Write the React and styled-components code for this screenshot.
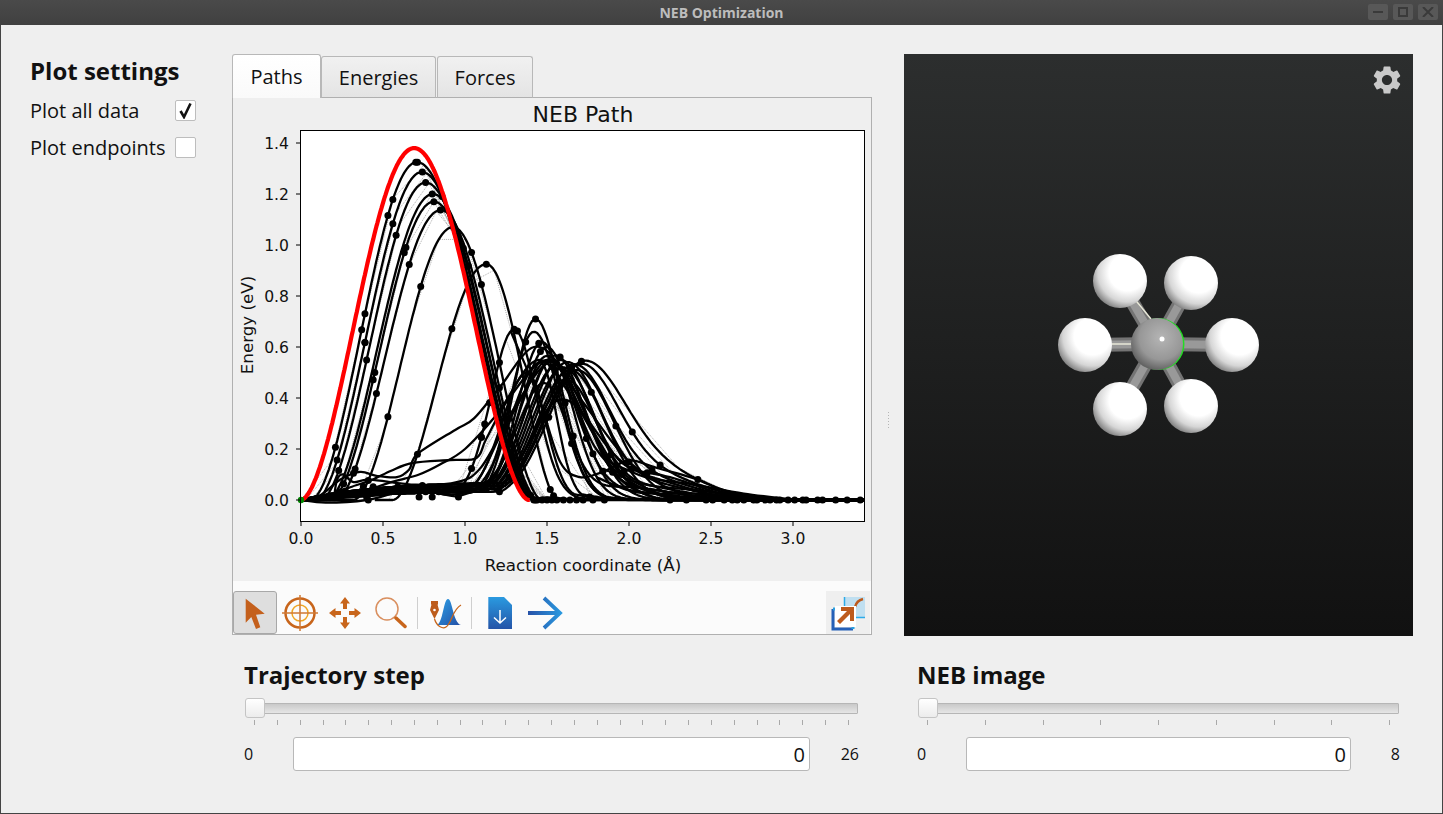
import React from 'react';
import styled, { createGlobalStyle } from 'styled-components';
import { MdSettings } from 'react-icons/md';

const GlobalStyle = createGlobalStyle`
  html, body {
    margin: 0;
    padding: 0;
    background: #efefef;
    overflow: hidden;
  }
  * { box-sizing: border-box; }
`;

const Window = styled.div`
  width: 1443px;
  height: 814px;
  display: flex;
  flex-direction: column;
  font-family: "Open Sans", "Noto Sans", sans-serif;
  color: #111;
  background: #efefef;
`;

const TitleBar = styled.div`
  height: 25px;
  flex: none;
  display: flex;
  align-items: center;
  justify-content: center;
  position: relative;
  background: linear-gradient(#4a4a4a, #404040);
  color: #bdbdbd;
  font-size: 14px;
  font-weight: 700;
`;

const WindowButtons = styled.div`
  position: absolute;
  top: 4px;
  right: 5px;
  display: flex;
  gap: 5px;
`;

const WindowButton = styled.div`
  width: 20px;
  height: 16px;
  background: #585858;
  border-radius: 2px;
  display: flex;
  align-items: center;
  justify-content: center;
`;

const Body = styled.div`
  flex: 1;
  display: flex;
  padding: 29px 29px 0 29px;
  border: 1px solid #444;
  border-top: none;
`;

const Sidebar = styled.div`
  width: 201px;
  flex: none;
`;

const SideTitle = styled.div`
  font-size: 24px;
  font-weight: 700;
  line-height: 30px;
  margin-top: 2px;
  margin-bottom: 6px;
`;

const CheckRow = styled.div`
  display: flex;
  align-items: center;
  justify-content: space-between;
  width: 166px;
  height: 37px;
  font-size: 20px;
`;

const CheckBox = styled.div`
  width: 21px;
  height: 21px;
  background: #fff;
  border: 1px solid #bdbdbd;
  border-radius: 2px;
  display: flex;
  align-items: center;
  justify-content: center;
`;

const CenterColumn = styled.div`
  width: 641px;
  flex: none;
  display: flex;
  flex-direction: column;
`;

const TabBar = styled.div`
  display: flex;
  align-items: flex-end;
  height: 44px;
  padding-left: 1px;
  position: relative;
  z-index: 1;
  margin-bottom: -1px;
`;

const Tab = styled.div`
  height: ${p => (p.$active ? '44px' : '42px')};
  width: ${p => p.$w}px;
  margin-right: ${p => (p.$active ? '0' : '1px')};
  display: flex;
  align-items: center;
  justify-content: center;
  font-size: 20px;
  border: 1px solid #b8b8b8;
  border-bottom: ${p => (p.$active ? 'none' : '1px solid #b0b0b0')};
  border-radius: 3px 3px 0 0;
  background: ${p => (p.$active ? 'linear-gradient(#fff, #fafafa)' : 'linear-gradient(#f1f1f1, #e4e4e4)')};
`;

const PlotPane = styled.div`
  width: 640px;
  margin-left: 1px;
  height: 538px;
  border: 1px solid #b0b0b0;
  background: #efefef;
  display: flex;
  flex-direction: column;
`;

const Chart = styled.svg`
  display: block;
  width: 638px;
  height: 483px;
  flex: none;
`;

const Toolbar = styled.div`
  flex: 1;
  display: flex;
  align-items: flex-end;
  gap: 1px;
  background: #fbfbfb;
`;

const ToolButton = styled.div`
  width: ${p => p.$w || 44}px;
  height: 43px;
  flex: none;
  display: flex;
  align-items: center;
  justify-content: center;
  border-radius: 3px;
  border: 1px solid ${p => (p.$active ? '#a8a8a8' : 'transparent')};
  background: ${p => (p.$active ? '#dedede' : 'transparent')};
  margin-left: ${p => (p.$push ? 'auto' : '0')};
  ${p => p.$flat && 'background: #efefef; border-radius: 0; margin-right: 1px;'}
`;

const ToolSep = styled.div`
  width: 1px;
  height: 32px;
  background: #cfcfcf;
  margin: 0 5px 5px 4px;
  flex: none;
`;

const Splitter = styled.div`
  width: 32px;
  flex: none;
  height: 582px;
  display: flex;
  align-items: center;
  justify-content: center;
  &::before {
    content: '';
    width: 1px;
    height: 16px;
    margin-top: 150px;
    background: repeating-linear-gradient(#b5b5b5 0 1px, transparent 1px 3px);
  }
`;

const RightColumn = styled.div`
  width: 509px;
  flex: none;
  display: flex;
  flex-direction: column;
`;

const Viewer = styled.div`
  width: 509px;
  height: 582px;
  position: relative;
  display: flex;
  align-items: center;
  justify-content: center;
  background: linear-gradient(#2c2e2e, #111);
`;

const GearButton = styled.div`
  position: absolute;
  top: 9px;
  right: 9px;
  color: #c9c9c9;
  display: flex;
`;

const SliderGroup = styled.div`
  padding: 0 13px;
  margin-top: ${p => p.$top}px;
`;

const SliderTitle = styled.div`
  font-size: 24px;
  font-weight: 700;
  line-height: 30px;
`;

const Track = styled.div`
  height: 20px;
  margin-top: 8px;
  display: flex;
  align-items: center;
  position: relative;
  padding-left: 1px;
  padding-right: 1px;
  &::before {
    content: '';
    flex: 1;
    height: 9px;
    background: linear-gradient(#c9c9c9, #e6e6e6);
    border: 1px solid #b6b6b6;
    border-radius: 1px;
  }
`;

const Handle = styled.div`
  position: absolute;
  left: 1px;
  top: 0;
  width: 20px;
  height: 20px;
  background: linear-gradient(#fff, #ececec);
  border: 1px solid #c4c4c4;
  border-radius: 3px;
`;

const Ticks = styled.div`
  display: flex;
  justify-content: space-between;
  padding: 0 ${p => p.$pad}px;
  margin-top: 2px;
  height: 5px;
`;

const Tick = styled.div`
  width: 1px;
  height: 5px;
  background: #a9a9a9;
`;

const ValueRow = styled.div`
  display: flex;
  align-items: center;
  justify-content: space-between;
  margin-top: 12px;
  font-size: 16px;
`;

const MinLabel = styled.div`
  width: 49px;
  flex: none;
`;

const ValueBox = styled.div`
  flex: 1;
  height: 34px;
  background: #fff;
  border: 1px solid #b8b8b8;
  border-radius: 3px;
  font-size: 20px;
  display: flex;
  align-items: center;
  justify-content: flex-end;
  padding-right: 4px;
`;

const MaxLabel = styled.div`
  width: 49px;
  flex: none;
  text-align: right;
`;

const px = x => 301 + x * 164;
const py = y => 500 - y * 255;

// rising / falling shape for the big barrier paths
const sineCurve = (x0, xp, x1, h, pow = 1.8) => x => {
  if (x <= x0 || x >= x1) return 0;
  const u = x < xp ? ((x - x0) / (xp - x0)) * 0.5 : 0.5 + ((x - xp) / (x1 - xp)) * 0.5;
  return h * Math.pow(Math.sin(Math.PI * u), pow);
};

const gaussCurve = (xp, h, wl, wr, shoulder = 0, base = 0.05) => x => {
  const w = x < xp ? wl : wr;
  const g = h * Math.exp(-Math.pow((x - xp) / w, 2));
  const b = base * (1 - Math.exp(-x / 0.45)) * (x < xp ? 1 : Math.exp(-Math.pow((x - xp) / 0.3, 2)));
  const s = shoulder * Math.exp(-Math.pow((x - (xp + 0.5)) / 0.38, 2)) * (x > xp - 0.1 ? 1 : 0);
  return Math.max(g, b) + s;
};

const bigSpecs = [
  [0.06, 0.707, 1.41, 1.325],
  [0.09, 0.737, 1.42, 1.286],
  [0.12, 0.76, 1.43, 1.245],
  [0.16, 0.805, 1.44, 1.2],
  [0.18, 0.81, 1.44, 1.17],
  [0.21, 0.853, 1.45, 1.137],
  [0.32, 0.927, 1.47, 1.07],
  [0.56, 1.13, 1.57, 0.925],
];

const bigPaths = bigSpecs.map(a => sineCurve(...a));

const latePaths = [
  [1.30, 0.67, 0.2, 0.19],
  [1.43, 0.71, 0.19, 0.21],
  [1.42, 0.66, 0.2, 0.22],
  [1.47, 0.62, 0.21, 0.2],
  [1.5, 0.6, 0.23, 0.22],
  [1.5, 0.56, 0.24, 0.25, 0.03],
  [1.53, 0.55, 0.24, 0.24],
  [1.55, 0.56, 0.26, 0.25, 0.04],
  [1.56, 0.53, 0.26, 0.27],
  [1.58, 0.54, 0.26, 0.27, 0.05],
  [1.6, 0.52, 0.27, 0.28],
  [1.62, 0.53, 0.27, 0.29, 0.06],
  [1.64, 0.51, 0.28, 0.3],
  [1.66, 0.52, 0.28, 0.31, 0.07],
  [1.68, 0.51, 0.29, 0.32],
  [1.7, 0.52, 0.3, 0.33, 0.08],
  [1.72, 0.53, 0.3, 0.36, 0.09],
  [1.46, 0.54, 0.25, 0.14],
  [1.38, 0.5, 0.22, 0.16],
  [1.58, 0.38, 0.26, 0.3, 0.08],
  [1.48, 0.45, 0.24, 0.2, 0.05],
  [1.62, 0.45, 0.28, 0.24, 0.1],
].map((a, i) => gaussCurve(a[0], a[1], a[2], a[3], a[4] || 0, 0.035 + (i % 4) * 0.012));

// hand-read paths that do not follow a single bump
const knotPaths = [
  [[0, 0], [0.12, 0.02], [0.24, 0.08], [0.36, 0.11], [0.46, 0.095], [0.585, 0.09], [0.66, 0.12], [0.71, 0.18], [0.94, 0.275], [1.055, 0.32], [1.21, 0.44], [1.42, 0.6], [1.6, 0.5], [1.8, 0.2], [2.1, 0.04], [2.5, 0]],
  [[0, 0], [0.2, 0.02], [0.3, 0.05], [0.43, 0.078], [0.55, 0.115], [0.68, 0.145], [0.91, 0.157], [1.07, 0.165], [1.13, 0.24], [1.27, 0.4], [1.5, 0.55], [1.7, 0.4], [2, 0.15], [2.3, 0.03], [2.6, 0]],
  [[0, 0], [0.3, 0.02], [0.55, 0.07], [0.72, 0.1], [0.85, 0.14], [1.0, 0.2], [1.2, 0.34], [1.45, 0.55], [1.7, 0.35], [1.9, 0.14], [2.2, 0.02], [2.5, 0]],
  [[0.2, 0], [0.22, 0.08], [0.26, 0.1], [0.32, 0.07], [0.42, 0.08], [0.7, 0.06], [0.95, 0.07], [1.1, 0.13], [1.3, 0.35], [1.52, 0.55], [1.75, 0.3], [1.95, 0.08], [2.2, 0]],
  [[0, 0], [0.4, 0.025], [0.8, 0.05], [1.0, 0.055], [1.1, 0.1], [1.3, 0.36], [1.55, 0.54], [1.8, 0.25], [2.0, 0.07], [2.3, 0]],
  [[1.28, 0.66], [1.45, 0.4], [1.58, 0.15], [1.7, 0.09], [1.84, 0.11], [2.0, 0.155], [2.15, 0.13], [2.42, 0.08], [2.63, 0.027], [3, 0]],
  [[0, 0], [0.1, 0.0], [0.3, 0.01], [0.5, 0.02], [0.75, 0.035], [0.9, 0.02], [1.05, 0.04], [1.15, 0.08], [1.22, 0.14]],
  [[0, 0], [0.15, -0.01], [0.4, 0.0], [0.6, 0.03], [0.8, 0.03], [0.95, 0.015], [1.1, 0.05], [1.2, 0.1]],
  [[1.85, 0.16], [2.1, 0.09], [2.4, 0.06], [2.7, 0.025], [3.0, 0.002]],
  [[1.85, 0.12], [2.1, 0.06], [2.4, 0.04], [2.7, 0.015], [3.0, 0]],
  [[1.8, 0.09], [2.05, 0.03], [2.4, 0.025], [2.7, 0.01], [3.0, 0]],
  [[1.4, 0], [1.5, 0.01], [1.7, 0], [1.85, 0]],
];

const sample = (fn, from = 0, to = 3.45, step = 0.015) => {
  const pts = [];
  for (let x = from; x <= to; x += step) pts.push([x, fn(x)]);
  return pts;
};

const toPath = pts => pts.map((p, i) => `${i ? 'L' : 'M'}${px(p[0]).toFixed(1)} ${py(p[1]).toFixed(1)}`).join('');

const splinePath = k => {
  let d = `M${px(k[0][0])} ${py(k[0][1])}`;
  for (let i = 0; i < k.length - 1; i++) {
    const p0 = k[Math.max(i - 1, 0)];
    const p1 = k[i];
    const p2 = k[i + 1];
    const p3 = k[Math.min(i + 2, k.length - 1)];
    const c1x = px(p1[0]) + (px(p2[0]) - px(p0[0])) / 6;
    const c1y = py(p1[1]) + (py(p2[1]) - py(p0[1])) / 6;
    const c2x = px(p2[0]) - (px(p3[0]) - px(p1[0])) / 6;
    const c2y = py(p2[1]) - (py(p3[1]) - py(p1[1])) / 6;
    d += `C${c1x.toFixed(1)} ${c1y.toFixed(1)} ${c2x.toFixed(1)} ${c2y.toFixed(1)} ${px(p2[0]).toFixed(1)} ${py(p2[1]).toFixed(1)}`;
  }
  return d;
};

const chordPath = (fn, from, to, n) => {
  const pts = [];
  for (let i = 0; i <= n; i++) {
    const x = from + ((to - from) * i) / n;
    pts.push([x, fn(x)]);
  }
  return toPath(pts);
};

// dots read off the picture, page coordinates
const dotsRaw = [
  [358, 309], [360, 330], [363, 345], [389, 213], [392, 226], [397, 237], [404, 249], [406, 256], [411, 267], [424, 286],
  [417, 162], [422, 172], [426, 182], [433, 194], [434, 201], [441, 210], [453, 227], [415, 148], [386, 196], [445, 196],
  [455, 329], [482, 286], [487, 264], [468, 267], [462, 249], [475, 253],
  [515, 329], [520, 329], [536, 319], [528, 343], [539, 345], [543, 353],
  [363, 345], [368, 358], [375, 372], [376, 380], [381, 393], [393, 417],
  [332, 447], [335, 458], [338, 472], [342, 483], [352, 473], [360, 472], [372, 480], [397, 477], [418, 454], [455, 430], [474, 418], [450, 460], [487, 439], [422, 485], [431, 490], [368, 500], [375, 492], [346, 492],
  [500, 387], [502, 363], [490, 402], [574, 342], [580, 355], [556, 373], [552, 420], [576, 438], [566, 403], [590, 393], [551, 367], [570, 368],
  [635, 431], [616, 425], [603, 472], [591, 456], [570, 445], [584, 439],
  [630, 460], [633, 468], [653, 467], [658, 467], [647, 472], [610, 456], [622, 476], [610, 474], [698, 480], [625, 471],
  [531, 496], [545, 492], [557, 493], [500, 498], [516, 492], [510, 478], [535, 500], [590, 498],
];

// snap each dot onto the nearest drawn curve
const curvePts = [
  ...bigPaths.flatMap(fn => sample(fn, 0, 1.7, 0.01)),
  ...latePaths.flatMap(fn => sample(fn, 0.3, 2.8, 0.01)),
].map(p => [px(p[0]), py(p[1])]);

const dotsPage = dotsRaw.map(([x, y]) => {
  let best = [x, y];
  let dist = Infinity;
  curvePts.forEach(p => {
    const d = (p[0] - x) ** 2 + (p[1] - y) ** 2;
    if (d < dist) {
      dist = d;
      best = p;
    }
  });
  return best;
});

const baseDotsX = [1.42, 1.44, 1.47, 1.5, 1.53, 1.56, 1.6, 1.64, 1.68, 1.72, 1.78, 1.85, 2.25, 2.35, 2.47, 2.51, 2.58, 2.63, 2.66, 2.7, 2.76, 2.78, 2.83, 2.86, 2.9, 2.92, 2.97, 3.01, 3.06, 3.08, 3.15, 3.18, 3.26, 3.33, 3.41];
const lowDotsX = [0.22, 0.24, 0.38, 0.4, 0.42, 0.44, 0.72, 0.76, 0.78, 0.8, 0.84, 0.9, 0.96];

const red = sineCurve(0, 0.69, 1.39, 1.38, 1.75);

const xTicks = [0, 0.5, 1, 1.5, 2, 2.5, 3];
const yTicks = [0, 0.2, 0.4, 0.6, 0.8, 1, 1.2, 1.4];

const PlotChart = () => (
  <Chart viewBox="233 98 638 483">
    <defs>
      <clipPath id="axes">
        <rect x="301" y="130" width="563" height="391" />
      </clipPath>
    </defs>
    <text x="583" y="122" fontFamily="DejaVu Sans" fontSize="22" textAnchor="middle" fill="#111">NEB Path</text>
    <rect x="301" y="130" width="563" height="391" fill="#fff" />
    <g clipPath="url(#axes)" fill="none" strokeLinejoin="round">
      <g stroke="#8a8a8a" strokeWidth="0.7" strokeDasharray="1 1">
        {bigPaths.map((fn, i) => <path key={i} d={chordPath(fn, 0.03 * i, 1.5, 8)} />)}
        {latePaths.map((fn, i) => <path key={i} d={chordPath(fn, 0.1 + i * 0.03, 2.4 + i * 0.03, 8)} />)}
      </g>
      <g stroke="#000" strokeWidth="2.3">
        {bigPaths.map((fn, i) => (
          <path key={i} d={toPath(sample(fn, i === 7 ? 0.45 : 0, bigSpecs[i][2], 0.01))} />
        ))}
        {latePaths.map((fn, i) => <path key={i} d={toPath(sample(fn))} />)}
        {knotPaths.map((k, i) => <path key={i} d={splinePath(k)} />)}
        <path d={`M${px(1.4)} ${py(0)}H${px(3.45)}`} />
      </g>
      <g fill="#000">
        {dotsPage.map(([x, y], i) => <circle key={i} cx={x} cy={y} r="3.5" />)}
        {baseDotsX.map((x, i) => <circle key={i} cx={px(x)} cy={py(0)} r="3.5" />)}
        {lowDotsX.map((x, i) => <circle key={i} cx={px(x)} cy={py(0.012 + 0.02 * (i % 3))} r="3.5" />)}
      </g>
      <path d={toPath(sample(red, 0, 1.395, 0.005))} stroke="#f00" strokeWidth="4.2" />
    </g>
    <circle cx="301" cy="500" r="3.2" fill="#080" />
    <rect x="300.5" y="130.5" width="564" height="391" fill="none" stroke="#000" strokeWidth="1" />
    <g stroke="#000" strokeWidth="1">
      {xTicks.map(t => <line key={t} x1={px(t)} x2={px(t)} y1="521" y2="526" />)}
      {yTicks.map(t => <line key={t} x1="296" x2="301" y1={py(t)} y2={py(t)} />)}
    </g>
    <g fontFamily="DejaVu Sans" fontSize="15.600" fill="#111">
      {xTicks.map(t => <text key={t} x={px(t)} y="544" textAnchor="middle">{t.toFixed(1)}</text>)}
      {yTicks.map(t => <text key={t} x="289" y={py(t) + 6} textAnchor="end">{t.toFixed(1)}</text>)}
    </g>
    <g fontFamily="DejaVu Sans" fontSize="16.700" fill="#111">
      <text x="583" y="571" textAnchor="middle">Reaction coordinate (Å)</text>
      <text x="0" y="0" textAnchor="middle" transform="translate(253 325) rotate(-90)">Energy (eV)</text>
    </g>
  </Chart>
);

const CursorIcon = () => (
  <svg width="34" height="34" viewBox="0 0 34 34">
    <polygon points="7.7,2.7 26.7,17.7 18,18.7 22.3,31.3 18,33 13.3,21 7.7,26.7" fill="#c4601c" />
  </svg>
);

const TargetIcon = () => (
  <svg width="36" height="36" viewBox="0 0 36 36" fill="none">
    <circle cx="18" cy="18" r="14.5" stroke="#c8651b" strokeWidth="2.5" />
    <circle cx="18" cy="18" r="8" stroke="#efa624" strokeWidth="1.5" />
    <path d="M18 0V36M0 18H36" stroke="#d07a35" strokeWidth="1.5" />
  </svg>
);

const MoveIcon = () => (
  <svg width="34" height="34" viewBox="0 0 34 34" fill="#c8651b">
    <path d="M17 1l5 6.500h-3V13h-4V7.500H12z" />
    <path d="M17 33l5-6.500h-3V21h-4v5.500H12z" />
    <path d="M1 17l6.500-5v3H13v4H7.500V22z" />
    <path d="M33 17l-6.500-5v3H21v4h5.500V22z" />
  </svg>
);

const ZoomIcon = () => (
  <svg width="34" height="34" viewBox="0 0 34 34" fill="none">
    <circle cx="14" cy="13" r="11" stroke="#d98f5f" strokeWidth="1.5" />
    <path d="M23 22L32 30.500" stroke="#c8651b" strokeWidth="3.500" strokeLinecap="round" />
  </svg>
);

const FitIcon = () => (
  <svg width="34" height="34" viewBox="0 0 34 34" fill="none">
    <defs>
      <linearGradient id="bell" x1="0" y1="0" x2="1" y2="1">
        <stop offset="0" stopColor="#2c9fe6" />
        <stop offset="1" stopColor="#2450a6" />
      </linearGradient>
    </defs>
    <path d="M9 29C15 27 15.500 3 20 3C24.500 3 25 27 33 29Z" fill="url(#bell)" />
    <path d="M3 5H10V8.500H9.500L11 14L6.500 23L2 14L3.500 8.500H3Z" fill="#bd5c1c" />
    <circle cx="6.500" cy="14" r="1.300" fill="#fff" />
    <path d="M6.500 23C9 31 15 33 18 31C24 27 24 14 33 9" stroke="#c8651b" strokeWidth="1.300" />
  </svg>
);

const SaveIcon = () => (
  <svg width="34" height="34" viewBox="0 0 34 34" fill="none">
    <defs>
      <linearGradient id="doc" x1="0" y1="0" x2="0" y2="1">
        <stop offset="0" stopColor="#2a9ae0" />
        <stop offset="1" stopColor="#2454a8" />
      </linearGradient>
    </defs>
    <path d="M5.300 1H21L29 9V33H5.300Z" fill="url(#doc)" />
    <path d="M17 14V27M11 21.500L17 27L23 21.500" stroke="#fff" strokeWidth="1.500" />
  </svg>
);

const ArrowIcon = () => (
  <svg width="36" height="36" viewBox="0 0 36 36" fill="none">
    <defs>
      <linearGradient id="arr" gradientUnits="userSpaceOnUse" x1="0" y1="18" x2="36" y2="18">
        <stop offset="0" stopColor="#2750a6" />
        <stop offset="1" stopColor="#2a9ce2" />
      </linearGradient>
    </defs>
    <path d="M1 18H33M17 3L33 18L17 33" stroke="url(#arr)" strokeWidth="3.800" />
  </svg>
);

const ExportIcon = () => (
  <svg width="36" height="36" viewBox="0 0 36 36" fill="none">
    <rect x="14" y="2" width="21" height="21" fill="#c0dff0" />
    <path d="M14.500 2V22.500H35" stroke="#2caae8" strokeWidth="1.500" />
    <path d="M25 12C26 8 29 5 33 4" stroke="#bd5a1c" strokeWidth="2.500" />
    <path d="M3 14V34H23" stroke="#2560b8" strokeWidth="3" />
    <path d="M3 14H6M23 34V31" stroke="#2aa0e0" strokeWidth="3" />
    <rect x="5" y="11" width="21" height="21" fill="#fff" />
    <path d="M11 12H24V26H20V19L10 29L7 26L17 16H11Z" fill="#bd5a1c" />
  </svg>
);

const atoms = [
  [67, 47], [138, 49], [32, 111], [179, 111], [67, 175], [138, 172],
];

const Molecule = () => (
  <svg width="212" height="222" viewBox="0 0 212 222">
    <defs>
      <radialGradient id="ball" cx="0.64" cy="0.34" r="0.76">
        <stop offset="0.45" stopColor="#fff" />
        <stop offset="0.72" stopColor="#d6d6d6" />
        <stop offset="1" stopColor="#666" />
      </radialGradient>
      <radialGradient id="core" cx="0.58" cy="0.38" r="0.7">
        <stop offset="0" stopColor="#b5b5b5" />
        <stop offset="0.6" stopColor="#979797" />
        <stop offset="1" stopColor="#525252" />
      </radialGradient>
    </defs>
    {atoms.map(([x, y], i) => (
      <g key={i}>
        <line x1="104" y1="110" x2={x} y2={y} stroke="#747474" strokeWidth="14" />
        <line x1="104" y1="110" x2={x} y2={y} stroke="#999" strokeWidth="8" />
      </g>
    ))}
    <line x1="98" y1="85" x2="75" y2="57" stroke="#e8e8d8" strokeWidth="1.500" />
    <line x1="50" y1="110" x2="80" y2="110" stroke="#e8e8d8" strokeWidth="1.500" />
    <circle cx="105.500" cy="110" r="26" fill="#22dd22" />
    <circle cx="104" cy="110" r="26" fill="url(#core)" />
    <circle cx="109" cy="105" r="2.500" fill="#fff" />
    {atoms.map(([x, y], i) => <circle key={i} cx={x} cy={y} r="27" fill="url(#ball)" />)}
  </svg>
);

const TickRow = ({ count, pad }) => (
  <Ticks $pad={pad}>
    {Array.from({ length: count }, (_, i) => <Tick key={i} />)}
  </Ticks>
);

const SliderPanel = ({ title, max, ticks, pad, top }) => (
  <SliderGroup $top={top}>
    <SliderTitle>{title}</SliderTitle>
    <Track><Handle /></Track>
    <TickRow count={ticks} pad={pad} />
    <ValueRow>
      <MinLabel>0</MinLabel>
      <ValueBox>0</ValueBox>
      <MaxLabel>{max}</MaxLabel>
    </ValueRow>
  </SliderGroup>
);

const App = () => (
  <Window>
    <GlobalStyle />
    <TitleBar>
      NEB Optimization
      <WindowButtons>
        <WindowButton>
          <svg width="12" height="10"><rect x="1" y="4" width="10" height="2" fill="#3a3a3a" /></svg>
        </WindowButton>
        <WindowButton>
          <svg width="12" height="10"><rect x="2" y="1" width="8" height="8" fill="none" stroke="#3a3a3a" strokeWidth="2" /></svg>
        </WindowButton>
        <WindowButton>
          <svg width="12" height="10"><path d="M1 0L11 10M11 0L1 10" stroke="#3a3a3a" strokeWidth="2" /></svg>
        </WindowButton>
      </WindowButtons>
    </TitleBar>
    <Body>
      <Sidebar>
        <SideTitle>Plot settings</SideTitle>
        <CheckRow>
          Plot all data
          <CheckBox>
            <svg width="15" height="17" viewBox="0 0 15 17" fill="none">
              <path d="M2.500 9L6 15L12.500 1.500" stroke="#111" strokeWidth="2.600" />
            </svg>
          </CheckBox>
        </CheckRow>
        <CheckRow>
          Plot endpoints
          <CheckBox />
        </CheckRow>
      </Sidebar>
      <CenterColumn>
        <TabBar>
          <Tab $active $w={89}>Paths</Tab>
          <Tab $w={115}>Energies</Tab>
          <Tab $w={96}>Forces</Tab>
        </TabBar>
        <PlotPane>
          <PlotChart />
          <Toolbar>
            <ToolButton $active><CursorIcon /></ToolButton>
            <ToolButton><TargetIcon /></ToolButton>
            <ToolButton><MoveIcon /></ToolButton>
            <ToolButton><ZoomIcon /></ToolButton>
            <ToolSep />
            <ToolButton $w={42}><FitIcon /></ToolButton>
            <ToolSep />
            <ToolButton><SaveIcon /></ToolButton>
            <ToolButton><ArrowIcon /></ToolButton>
            <ToolButton $push $flat><ExportIcon /></ToolButton>
          </Toolbar>
        </PlotPane>
        <SliderPanel title="Trajectory step" max="26" ticks={27} pad={10} top={25} />
      </CenterColumn>
      <Splitter />
      <RightColumn>
        <Viewer>
          <Molecule />
          <GearButton><MdSettings size={34} /></GearButton>
        </Viewer>
        <SliderPanel title="NEB image" max="8" ticks={9} pad={10} top={24} />
      </RightColumn>
    </Body>
  </Window>
);

export default App;
